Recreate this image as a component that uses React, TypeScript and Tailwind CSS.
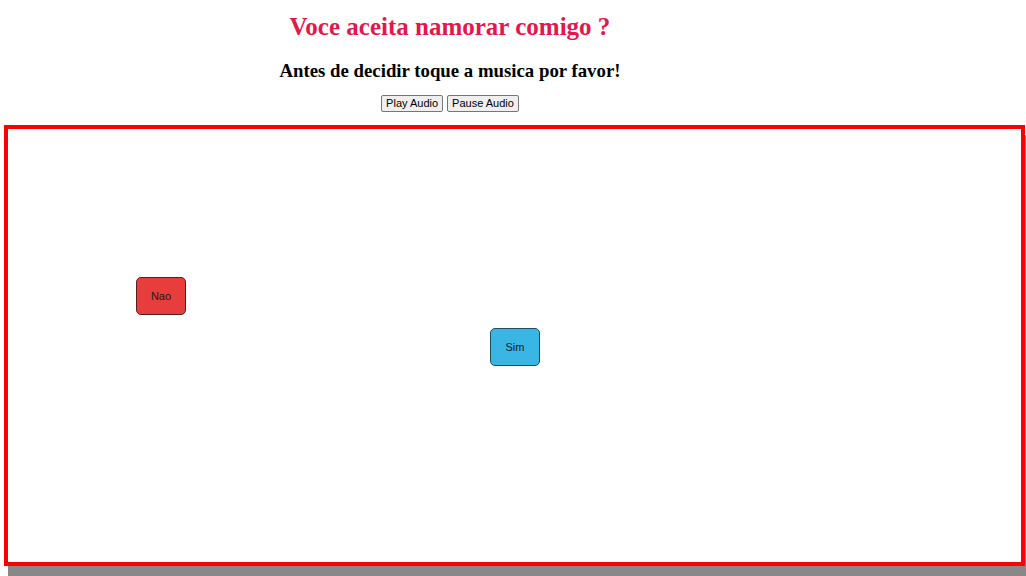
import React from "react";

export default function App() {
  const serif = { fontFamily: '"Liberation Serif", "Times New Roman", serif' };

  return (
    <div className="w-[1026px] h-[576px] overflow-hidden bg-white">
      {/* Header */}
      <div className="w-[900px] text-center" style={serif}>
        <h2 className="pt-[13px] text-[25px] leading-[28px] font-bold text-[#e5174a]">
          Voce aceita namorar comigo ?
        </h2>
        <h3 className="mt-[19px] text-[18.8px] leading-[22px] font-bold text-black">
          Antes de decidir toque a musica por favor!
        </h3>
        <div className="mt-[13px] flex justify-center gap-[4px] font-['Liberation_Sans',Arial,sans-serif]">
          <button className="h-[17px] px-[4px] text-[11px] leading-none text-black bg-[#efefef] border border-[#767676] rounded-[2px]">
            Play Audio
          </button>
          <button className="h-[17px] px-[4px] text-[11px] leading-none text-black bg-[#efefef] border border-[#767676] rounded-[2px]">
            Pause Audio
          </button>
        </div>
      </div>

      {/* Play area */}
      <div className="relative mt-[13px] ml-[4px] w-[1021px] h-[441px] border-4 border-[#ff0000] shadow-[4px_10px_0_#888888] font-['Liberation_Sans',Arial,sans-serif]">
        <button className="absolute left-[128px] top-[148px] w-[50px] h-[38px] text-[11px] text-[#1a1a1a] bg-[#e83d3d] border border-[#5a1e1e] rounded-[5px]">
          Nao
        </button>
        <button className="absolute left-[482px] top-[199px] w-[50px] h-[38px] text-[11px] text-[#1a1a1a] bg-[#39b6e3] border border-[#1f4e63] rounded-[5px]">
          Sim
        </button>
      </div>
    </div>
  );
}
